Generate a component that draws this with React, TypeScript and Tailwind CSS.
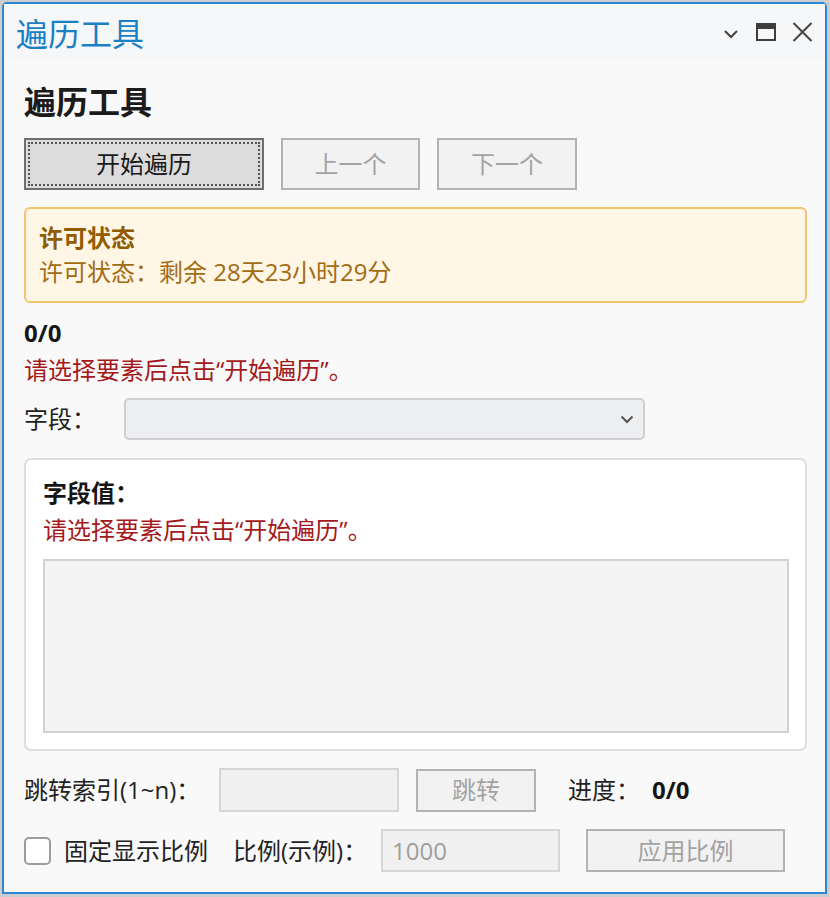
import React from "react";

const font = "font-['Open_Sans','Noto_Sans_CJK_SC',sans-serif]";

function TitleIcons() {
  return (
    <div className="flex items-center">
      <svg width="16" height="10" viewBox="0 0 16 10" className="mr-[17px] mt-[4px]">
        <path d="M2 2 L8 8 L14 2" fill="none" stroke="#444" strokeWidth="2" />
      </svg>
      <svg width="20" height="18" viewBox="0 0 20 18" className="mr-[16px]">
        <rect x="1" y="1" width="18" height="16" fill="none" stroke="#3d3d3d" strokeWidth="2" />
        <rect x="1" y="1" width="18" height="5" fill="#3d3d3d" />
      </svg>
      <svg width="21" height="20" viewBox="0 0 21 20">
        <path d="M1.5 1 L19.5 19 M19.5 1 L1.5 19" fill="none" stroke="#444" strokeWidth="2" />
      </svg>
    </div>
  );
}

function GrayButton({ label, className }: { label: string; className: string }) {
  return (
    <div
      className={`flex items-center justify-center border-2 border-[#b3b3b3] bg-[#f2f2f2] text-[24px] leading-none text-[#a3a3a3] ${className}`}
    >
      {label}
    </div>
  );
}

export default function App() {
  return (
    <div className={`h-[897px] w-[830px] bg-[#cdcdcd] pl-[2px] pt-[2px] ${font}`}>
      <div className="flex h-[892px] w-[825px] flex-col rounded-t-[5px] border-2 border-[#2b87d1] bg-[#f9f9f9]">
        {/* title bar */}
        <div className="flex h-[56px] shrink-0 items-center justify-between bg-[#f6f7f8] pl-[12px] pr-[12px]">
          <span className="mt-[3px] text-[32px] leading-none text-[#1a80c6]">遍历工具</span>
          <TitleIcons />
        </div>

        <div className="flex flex-col pl-[20px] pr-[18px]">
          <h1 className="mt-[22px] text-[32px] font-bold leading-[40px] text-[#1b1b1b]">遍历工具</h1>

          <div className="mt-[16px] flex gap-[17px]">
            <div className="flex h-[52px] w-[240px] items-center justify-center border-2 border-[#6e6e6e] bg-[#dcdcdc] p-[2px]">
              <div className="flex h-full w-full items-center justify-center border-2 border-dotted border-[#555] text-[24px] leading-none text-[#1a1a1a]">
                开始遍历
              </div>
            </div>
            <GrayButton label="上一个" className="h-[52px] w-[139px]" />
            <GrayButton label="下一个" className="h-[52px] w-[140px]" />
          </div>

          <div className="mt-[17px] flex h-[96px] flex-col justify-center rounded-[6px] border-2 border-[#f2c670] bg-[#fff6e6] px-[13px]">
            <div className="text-[24px] font-bold leading-[34px] text-[#915c00]">许可状态</div>
            <div className="text-[24px] leading-[34px] text-[#a26c12]">许可状态：剩余 28天23小时29分</div>
          </div>

          <div className="mt-[13px] text-[24px] font-bold leading-[34px] text-[#161616]">0/0</div>
          <div className="mt-[3px] text-[24px] leading-[34px] text-[#a4191b]">请选择要素后点击“开始遍历”。</div>

          <div className="mt-[11px] flex items-center">
            <span className="w-[100px] text-[24px] leading-[34px] text-[#222]">字段：</span>
            <div className="flex h-[42px] w-[521px] items-center justify-end rounded-[5px] border-2 border-[#cfcfd2] bg-[#eeeff1] pr-[9px]">
              <svg width="14" height="9" viewBox="0 0 14 9">
                <path d="M1.5 1.5 L7 7 L12.5 1.5" fill="none" stroke="#555" strokeWidth="2" />
              </svg>
            </div>
          </div>

          <div className="mt-[18px] flex h-[293px] flex-col rounded-[7px] border-2 border-[#dedede] bg-white pl-[17px] pr-[16px]">
            <div className="mt-[16px] text-[24px] font-bold leading-[34px] text-[#161616]">字段值：</div>
            <div className="mt-[3px] text-[24px] leading-[34px] text-[#a4191b]">请选择要素后点击“开始遍历”。</div>
            <div className="mt-[12px] h-[174px] border-2 border-[#d2d2d4] bg-[#f4f4f4]" />
          </div>

          <div className="mt-[17px] flex items-center">
            <span className="w-[195px] text-[24px] leading-[34px] text-[#222]">跳转索引(1~n)：</span>
            <div className="h-[44px] w-[180px] border-2 border-[#d6d6d6] bg-[#f0f0f1]" />
            <GrayButton label="跳转" className="ml-[17px] h-[43px] w-[120px]" />
            <span className="ml-[32px] w-[84px] text-[24px] leading-[34px] text-[#222]">进度：</span>
            <span className="text-[24px] font-bold leading-[34px] text-[#161616]">0/0</span>
          </div>

          <div className="mt-[17px] flex items-center">
            <div className="h-[28px] w-[27px] rounded-[5px] border-2 border-[#9c9c9c] bg-white" />
            <span className="ml-[13px] w-[169px] text-[24px] leading-[34px] text-[#222]">固定显示比例</span>
            <span className="w-[148px] text-[24px] leading-[34px] text-[#222]">比例(示例)：</span>
            <div className="flex h-[43px] w-[179px] items-center border-2 border-[#d6d6d6] bg-[#f0f0f1] pl-[9px] text-[24px] leading-none text-[#9e9e9e]">
              1000
            </div>
            <GrayButton label="应用比例" className="ml-[26px] h-[43px] w-[199px]" />
          </div>
        </div>
      </div>
    </div>
  );
}
